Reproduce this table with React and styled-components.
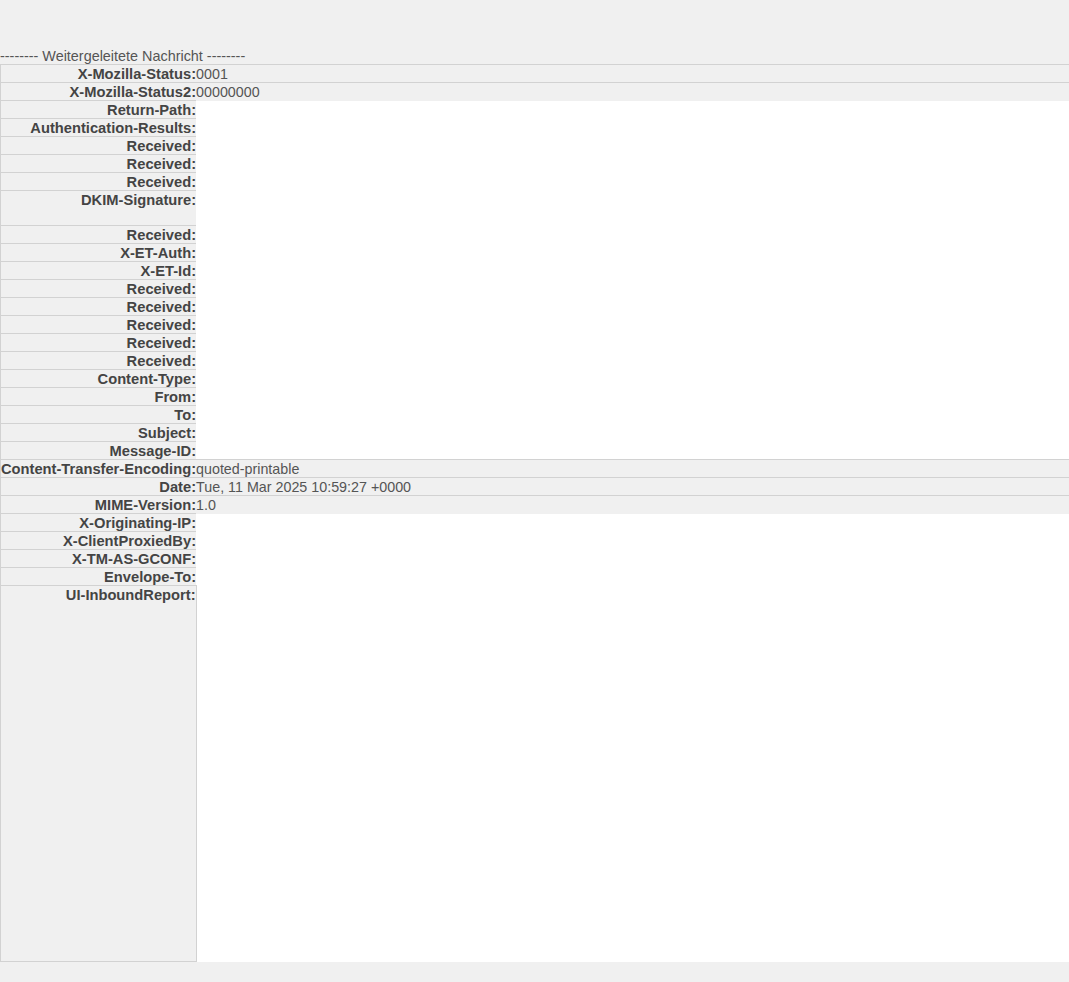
import React from 'react';
import styled, { createGlobalStyle } from 'styled-components';

const GlobalStyle = createGlobalStyle`
  html, body {
    margin: 0;
    padding: 0;
    background: #f0f0f0;
  }
  body {
    font-family: "Liberation Sans", Arial, sans-serif;
    font-size: 14.4px;
    color: #555;
  }
`;

const Page = styled.div`
  padding-top: 48px;
  min-height: 982px;
  box-sizing: border-box;
`;

const Separator = styled.div`
  line-height: 16px;
  font-size: 14.4px;
  color: #555;
  white-space: nowrap;
`;

const HeaderTable = styled.table`
  width: 100%;
  border-collapse: collapse;
  border-spacing: 0;
`;

const Label = styled.th`
  text-align: right;
  vertical-align: top;
  white-space: nowrap;
  font-weight: bold;
  font-size: 14.7px;
  color: #444;
  padding: 1px 0 0;
  height: ${(p) => p.$height}px;
  line-height: 16px;
  border-top: 1px solid #d2d2d2;
  border-left: 1px solid #d2d2d2;
  border-right: ${(p) => (p.$last ? '1px solid #d2d2d2' : 'none')};
  border-bottom: ${(p) => (p.$last ? '1px solid #d2d2d2' : 'none')};
  background: #f0f0f0;
`;

const Value = styled.td`
  width: 100%;
  vertical-align: top;
  padding: 1px 0 0;
  font-size: 14.3px;
  line-height: 16px;
  white-space: nowrap;
  color: #555;
  background: ${(p) => (p.$hidden ? '#ffffff' : '#f0f0f0')};
  border-top: ${(p) => (p.$hidden ? 'none' : '1px solid #d2d2d2')};
`;

const headers = [
  { name: 'X-Mozilla-Status', value: '0001' },
  { name: 'X-Mozilla-Status2', value: '00000000' },
  { name: 'Return-Path' },
  { name: 'Authentication-Results' },
  { name: 'Received' },
  { name: 'Received' },
  { name: 'Received' },
  { name: 'DKIM-Signature', height: 33 },
  { name: 'Received' },
  { name: 'X-ET-Auth' },
  { name: 'X-ET-Id' },
  { name: 'Received' },
  { name: 'Received' },
  { name: 'Received' },
  { name: 'Received' },
  { name: 'Received' },
  { name: 'Content-Type' },
  { name: 'From' },
  { name: 'To' },
  { name: 'Subject' },
  { name: 'Message-ID' },
  { name: 'Content-Transfer-Encoding', value: 'quoted-printable' },
  { name: 'Date', value: 'Tue, 11 Mar 2025 10:59:27 +0000' },
  { name: 'MIME-Version', value: '1.0' },
  { name: 'X-Originating-IP' },
  { name: 'X-ClientProxiedBy' },
  { name: 'X-TM-AS-GCONF' },
  { name: 'Envelope-To' },
  { name: 'UI-InboundReport', height: 374, last: true },
];

export default function App() {
  return (
    <>
      <GlobalStyle />
      <Page>
        <Separator>-------- Weitergeleitete Nachricht --------</Separator>
        <HeaderTable>
          <tbody>
            {headers.map((h, i) => (
              <tr key={i}>
                <Label $height={h.height || 16} $last={h.last}>
                  {h.name}:
                </Label>
                <Value $hidden={!h.value}>{h.value}</Value>
              </tr>
            ))}
          </tbody>
        </HeaderTable>
      </Page>
    </>
  );
}
